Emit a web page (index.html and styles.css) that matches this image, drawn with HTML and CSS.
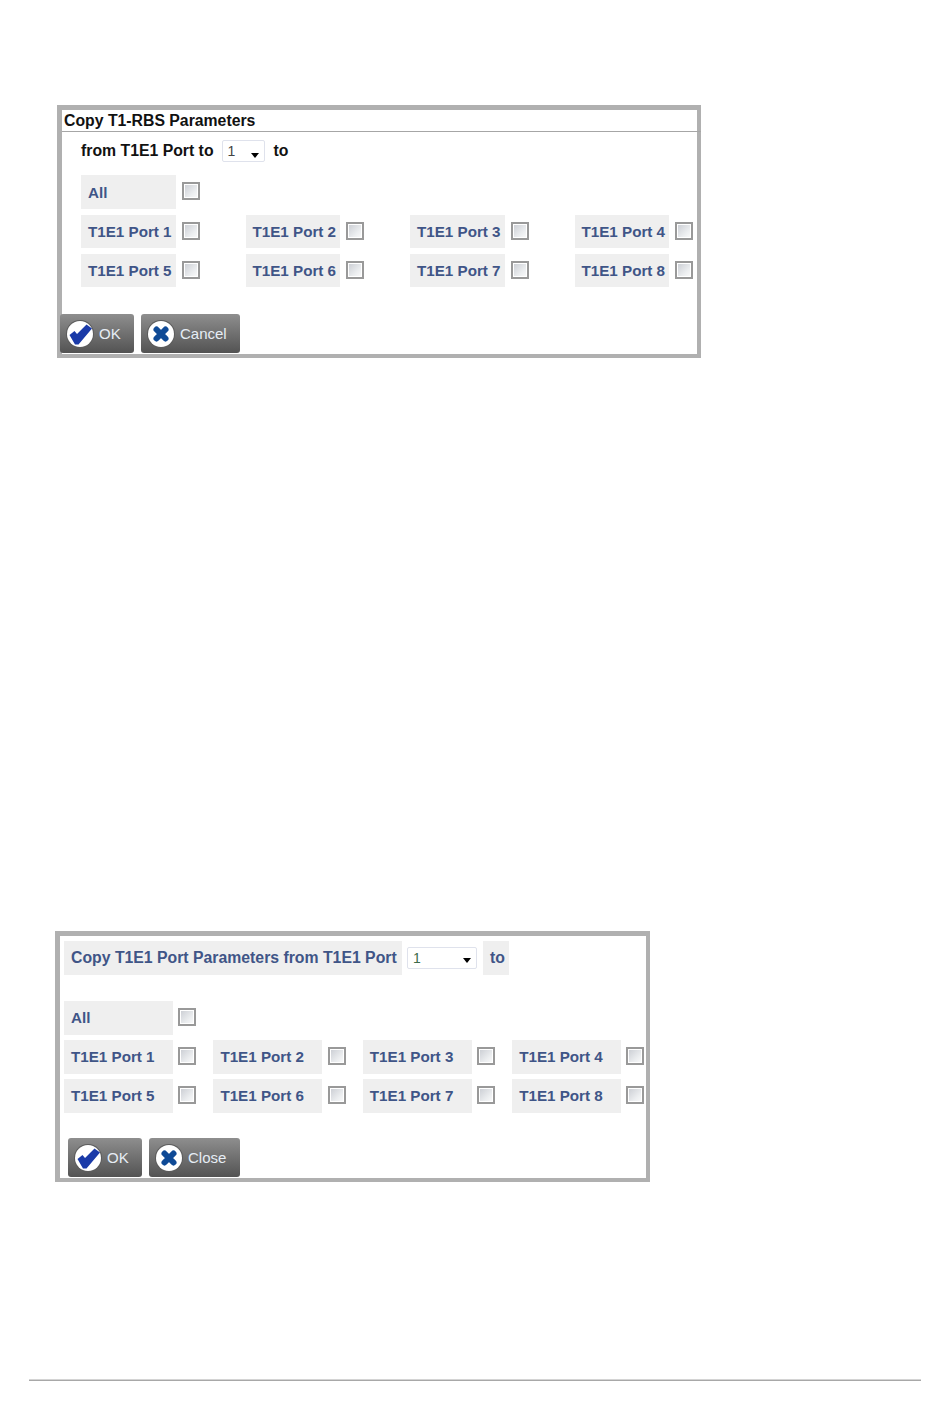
FILE: index.html
```html
<!DOCTYPE html>
<html lang="en">
<head>
<meta charset="utf-8">
<title>Copy Parameters</title>
<link rel="stylesheet" href="styles.css">
</head>
<body>
<svg class="defs" width="0" height="0" aria-hidden="true">
  <symbol id="icon-ok" viewBox="0 0 28 28">
    <circle cx="14" cy="14" r="14" fill="#5c5c5c"/>
    <circle cx="14" cy="14" r="13" fill="#fff"/>
    <path d="M3.5 15 L8.5 11 L11 14 L20.5 4.5 L26 8.5 L12.5 24.5 L9 24.5 Z" fill="#1a3aa8"/>
  </symbol>
  <symbol id="icon-x" viewBox="0 0 28 28">
    <circle cx="14" cy="14" r="14" fill="#5c5c5c"/>
    <circle cx="14" cy="14" r="13" fill="#fff"/>
    <path d="M9.5 9.5 L18.5 18.5 M18.5 9.5 L9.5 18.5" fill="none" stroke="#0f4a96" stroke-width="6" stroke-linecap="round"/>
  </symbol>
</svg>

<section class="dialog dialog-rbs">
  <h2 class="title">Copy T1-RBS Parameters</h2>
  <div class="from-row">
    <span class="from-text">from T1E1 Port to</span>
    <div class="select select-small"><span>1</span><i class="arrow"></i></div>
    <span class="from-text to-text">to</span>
  </div>
  <div class="ports">
    <div class="cell cell-all"><span class="label">All</span><input class="check" type="checkbox"></div>
    <div class="cell"><span class="label">T1E1 Port 1</span><input class="check" type="checkbox"></div>
    <div class="cell"><span class="label">T1E1 Port 2</span><input class="check" type="checkbox"></div>
    <div class="cell"><span class="label">T1E1 Port 3</span><input class="check" type="checkbox"></div>
    <div class="cell"><span class="label">T1E1 Port 4</span><input class="check" type="checkbox"></div>
    <div class="cell"><span class="label">T1E1 Port 5</span><input class="check" type="checkbox"></div>
    <div class="cell"><span class="label">T1E1 Port 6</span><input class="check" type="checkbox"></div>
    <div class="cell"><span class="label">T1E1 Port 7</span><input class="check" type="checkbox"></div>
    <div class="cell"><span class="label">T1E1 Port 8</span><input class="check" type="checkbox"></div>
  </div>
  <div class="buttons">
    <button class="btn btn-ok" type="button"><svg class="btn-icon"><use href="#icon-ok"/></svg>OK</button>
    <button class="btn btn-cancel" type="button"><svg class="btn-icon"><use href="#icon-x"/></svg>Cancel</button>
  </div>
</section>

<section class="dialog dialog-port">
  <div class="head-row">
    <span class="label label-head">Copy T1E1 Port Parameters from T1E1 Port</span>
    <div class="select select-wide"><span>1</span><i class="arrow"></i></div>
    <span class="label label-to">to</span>
  </div>
  <div class="ports">
    <div class="cell cell-all"><span class="label">All</span><input class="check" type="checkbox"></div>
    <div class="cell"><span class="label">T1E1 Port 1</span><input class="check" type="checkbox"></div>
    <div class="cell"><span class="label">T1E1 Port 2</span><input class="check" type="checkbox"></div>
    <div class="cell"><span class="label">T1E1 Port 3</span><input class="check" type="checkbox"></div>
    <div class="cell"><span class="label">T1E1 Port 4</span><input class="check" type="checkbox"></div>
    <div class="cell"><span class="label">T1E1 Port 5</span><input class="check" type="checkbox"></div>
    <div class="cell"><span class="label">T1E1 Port 6</span><input class="check" type="checkbox"></div>
    <div class="cell"><span class="label">T1E1 Port 7</span><input class="check" type="checkbox"></div>
    <div class="cell"><span class="label">T1E1 Port 8</span><input class="check" type="checkbox"></div>
  </div>
  <div class="buttons">
    <button class="btn btn-ok" type="button"><svg class="btn-icon"><use href="#icon-ok"/></svg>OK</button>
    <button class="btn btn-close" type="button"><svg class="btn-icon"><use href="#icon-x"/></svg>Close</button>
  </div>
</section>

<hr class="footer-rule">
</body>
</html>
```

FILE: styles.css
```css
* { box-sizing: border-box; }

html, body { margin: 0; padding: 0; background: #fff; }

body {
  height: 1409px;
  overflow: hidden;
  padding-top: 105px;
  font-family: "Liberation Sans", Arial, sans-serif;
}

.defs { position: absolute; }

.dialog {
  background: #fff;
  border: 4px solid #b0b0b0;
  border-top-width: 5px;
  border-left-width: 5px;
}

.dialog-rbs {
  width: 644px;
  height: 253px;
  margin-left: 57px;
}

.dialog-port {
  width: 595px;
  height: 251px;
  margin: 573px 0 0 55px;
  padding-top: 5px;
}

.title {
  margin: 0 -4px 0 0;
  height: 22px;
  padding-left: 2px;
  border-bottom: 1px solid #a6a6a6;
  font-size: 15.8px;
  font-weight: 700;
  line-height: 21px;
  color: #111;
}

.from-row {
  display: flex;
  align-items: center;
  height: 22px;
  margin: 8px 0 0 19px;
}

.from-text {
  font-size: 15.8px;
  font-weight: 700;
  color: #111;
}

.to-text { margin-left: 9px; }

.select {
  position: relative;
  height: 22px;
  border: 1px solid #dfe2ec;
  border-radius: 2px;
  background: #fff;
  font-size: 14px;
  line-height: 20px;
  color: #444;
}

.select-small { width: 43px; margin-left: 8px; padding-left: 5px; }

.select-wide { width: 70px; margin: 0 6px 0 5px; padding-left: 5px; color: #3d6b4a; }

.arrow {
  position: absolute;
  right: 5px;
  top: 10px;
  border: 4.5px solid transparent;
  border-top: 5px solid #000;
  border-bottom: 0;
}

.select-small .arrow { top: 12px; }

.head-row {
  display: flex;
  align-items: center;
  height: 34px;
  margin-left: 4px;
}

.ports {
  display: grid;
}

.dialog-rbs .ports {
  grid-template-columns: repeat(4, 164.5px);
  row-gap: 6px;
  margin: 13px 0 0 19px;
}

.dialog-port .ports {
  grid-template-columns: repeat(4, 149.4px);
  row-gap: 5px;
  margin: 26px 0 0 4px;
}

.cell {
  display: flex;
  align-items: center;
  height: 33px;
}

.dialog-port .cell { height: 34px; }

.cell-all { grid-column: 1 / -1; height: 34px; }

.label {
  display: block;
  align-self: stretch;
  padding-left: 7px;
  background: #efefef;
  font-size: 15.2px;
  font-weight: 700;
  line-height: 33px;
  color: #3f5587;
  white-space: nowrap;
}

.dialog-rbs .label { width: 94.5px; }

.dialog-rbs .cell-all .label { line-height: 35px; }

.dialog-port .cell .label { width: 109px; line-height: 34px; }

.label-head, .label-to { height: 34px; font-size: 15.8px; line-height: 34px; }

.label-head { width: 338px; }

.label-to { width: 26px; }

.check {
  appearance: none;
  flex: none;
  width: 18px;
  height: 18px;
  margin: 0 0 1px 6.4px;
  border: 2px solid #999;
  background: linear-gradient(135deg, #c9ccd2 0%, #eceef0 65%, #fbfbfb 100%);
  box-shadow: inset 0 0 0 1px #fff;
}

.cell-all .check { margin-bottom: 2px; }

.dialog-port .check { margin: 0 0 2px 5.25px; }

.buttons {
  display: flex;
  gap: 7px;
}

.dialog-rbs .buttons { margin: 27px 0 0 -2px; }

.dialog-port .buttons { margin: 25px 0 0 8px; }

.btn {
  display: flex;
  align-items: center;
  height: 39px;
  padding: 0 0 0 6px;
  border: 0;
  border-radius: 3px;
  background: linear-gradient(#8e8e8e, #535353);
  font-family: inherit;
  font-size: 15px;
  color: #e6edf5;
}

.btn-icon {
  flex: none;
  width: 28px;
  height: 28px;
  margin-right: 5px;
}

.btn-ok { width: 74px; }

.btn-cancel { width: 99px; }

.btn-close { width: 91px; }

.footer-rule {
  width: 892px;
  height: 2px;
  margin: 197px 0 0 29px;
  border: 0;
  border-top: 1px solid #d4d4d4;
  border-bottom: 1px solid #a8a8a8;
}
```
